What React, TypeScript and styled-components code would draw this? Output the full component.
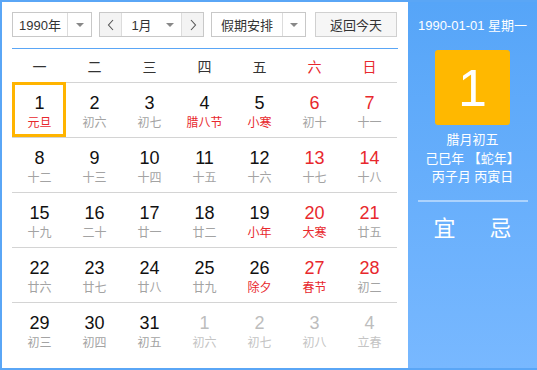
import React from "react";
import styled, { createGlobalStyle, css } from "styled-components";

const Global = createGlobalStyle`
  html, body { margin: 0; padding: 0; background: #fff; }
  body { font-family: "Liberation Sans", "Noto Sans CJK SC", sans-serif; }
  *, *::before, *::after { box-sizing: border-box; }
`;

const CJK = `"Liberation Sans", "Noto Sans CJK SC", sans-serif`;

const Frame = styled.div`
  width: 537px;
  height: 370px;
  display: flex;
  background: #5aa6f6;
  padding: 2px 0 2px 2px;
`;

const Main = styled.div`
  width: 406px;
  background: #fff;
  padding: 10px 10px 0 10px;
  display: flex;
  flex-direction: column;
`;

const Toolbar = styled.div`
  display: flex;
  height: 25px;
  font-family: ${CJK};
  font-size: 13px;
  color: #333;
`;

const Select = styled.div<{ $w: number; $text: number; $ml?: number }>`
  width: ${(p) => p.$w}px;
  margin-left: ${(p) => p.$ml ?? 0}px;
  height: 25px;
  border: 1px solid #c8c8c8;
  background: #fff;
  display: grid;
  grid-template-columns: ${(p) => p.$text}px 1fr;
`;

const SelText = styled.div`
  display: flex;
  align-items: center;
  justify-content: center;
  border-right: 1px solid #dcdcdc;
`;

const Arrow = styled.div`
  display: flex;
  align-items: center;
  justify-content: center;
  &::after {
    content: "";
    border-left: 4px solid transparent;
    border-right: 4px solid transparent;
    border-top: 4px solid #888;
  }
`;

const MonthGroup = styled.div`
  margin-left: 7px;
  width: 105px;
  height: 25px;
  border: 1px solid #c8c8c8;
  display: grid;
  grid-template-columns: 22px 1fr 22px;
`;

const NavBtn = styled.div<{ $side: "l" | "r" }>`
  background: #f3f3f3;
  display: flex;
  align-items: center;
  justify-content: center;
  ${(p) => (p.$side === "l" ? css`border-right: 1px solid #dcdcdc;` : css`border-left: 1px solid #dcdcdc;`)}
`;

const MonthSel = styled.div`
  display: grid;
  grid-template-columns: 1fr 22px;
  & > span {
    display: flex;
    align-items: center;
    justify-content: center;
    padding-left: 2px;
  }
`;

const TodayBtn = styled.div`
  margin-left: 9px;
  width: 82px;
  height: 25px;
  border: 1px solid #d0d0d0;
  background: #f6f6f6;
  display: flex;
  align-items: center;
  justify-content: center;
  color: #333;
`;

const BlueLine = styled.div`
  margin-top: 11px;
  height: 1px;
  background: #5aa6f6;
`;

const Grid = styled.div`
  display: grid;
  grid-template-columns: repeat(7, 55px);
`;

const Head = styled.div<{ $red?: boolean }>`
  height: 34px;
  display: flex;
  align-items: center;
  justify-content: center;
  font-family: ${CJK};
  font-size: 14px;
  color: ${(p) => (p.$red ? "#e8282d" : "#333")};
  border-bottom: 1px solid #d4d4d4;
`;

const Cell = styled.div<{ $sel?: boolean; $last?: boolean }>`
  height: 55px;
  display: flex;
  flex-direction: column;
  align-items: center;
  padding-top: 10px;
  border-bottom: ${(p) => (p.$last ? "none" : "1px solid #d4d4d4")};
  position: relative;
  ${(p) =>
    p.$sel &&
    css`
      &::before {
        content: "";
        position: absolute;
        left: 0;
        top: -1px;
        width: 54px;
        height: 55px;
        border: 3px solid #ffb400;
      }
    `}
`;

const Num = styled.div<{ $tone: "n" | "r" | "g" }>`
  height: 21px;
  line-height: 21px;
  font-family: "Liberation Sans", Arial, sans-serif;
  font-size: 18px;
  color: ${(p) => (p.$tone === "r" ? "#e8282d" : p.$tone === "g" ? "#bdbdbd" : "#111")};
`;

const Lunar = styled.div<{ $tone: "n" | "r" | "g" }>`
  margin-top: 1px;
  line-height: 16px;
  font-family: ${CJK};
  font-size: 12px;
  color: ${(p) => (p.$tone === "r" ? "#e8282d" : p.$tone === "g" ? "#c4c4c4" : "#a3a3a3")};
`;

const Side = styled.div`
  flex: 1;
  background: linear-gradient(#56a5f8, #78b8ff);
  display: flex;
  flex-direction: column;
  align-items: center;
  color: #fff;
  font-family: ${CJK};
`;

const DateLine = styled.div`
  margin-top: 15px;
  font-size: 13px;
  line-height: 18px;
`;

const DayBox = styled.div`
  margin-top: 15px;
  width: 75px;
  height: 75px;
  border-radius: 3px;
  background: #ffb800;
  display: flex;
  align-items: center;
  justify-content: center;
  font-family: "Liberation Sans", Arial, sans-serif;
  font-size: 52px;
  color: #fff;
`;

const Info = styled.div<{ $mt?: number }>`
  margin-top: ${(p) => p.$mt ?? 0}px;
  font-size: 13px;
  line-height: 18.5px;
  text-align: center;
`;

const Divider = styled.div`
  margin-top: 13px;
  width: 110px;
  height: 2px;
  background: rgba(255, 255, 255, 0.45);
`;

const YiJi = styled.div`
  margin-top: 13px;
  display: flex;
  gap: 34px;
  font-size: 22px;
  line-height: 28px;
`;

type Tone = "n" | "r" | "g";
type Day = { d: number; l: string; nt: Tone; lt: Tone; sel?: boolean };

const heads = ["一", "二", "三", "四", "五", "六", "日"];

const mk = (d: number, l: string, col: number, lr = false, other = false, sel = false): Day => ({
  d,
  l,
  nt: other ? "g" : col >= 5 ? "r" : "n",
  lt: other ? "g" : lr ? "r" : "n",
  sel,
});

const lunar: [string, boolean][] = [
  ["元旦", true], ["初六", false], ["初七", false], ["腊八节", true], ["小寒", true], ["初十", false], ["十一", false],
  ["十二", false], ["十三", false], ["十四", false], ["十五", false], ["十六", false], ["十七", false], ["十八", false],
  ["十九", false], ["二十", false], ["廿一", false], ["廿二", false], ["小年", true], ["大寒", true], ["廿五", false],
  ["廿六", false], ["廿七", false], ["廿八", false], ["廿九", false], ["除夕", true], ["春节", true], ["初二", false],
  ["初三", false], ["初四", false], ["初五", false],
];
const tail = ["初六", "初七", "初八", "立春"];

const days: Day[] = [];
lunar.forEach(([l, r], i) => days.push(mk(i + 1, l, i % 7, r, false, i === 0)));
tail.forEach((l, i) => days.push(mk(i + 1, l, (31 + i) % 7, false, true)));

const Chev = ({ dir }: { dir: "l" | "r" }) => (
  <svg width="8" height="12" viewBox="0 0 8 12">
    <path
      d={dir === "l" ? "M6 1 L1.5 6 L6 11" : "M2 1 L6.5 6 L2 11"}
      fill="none"
      stroke="#555"
      strokeWidth="1.1"
    />
  </svg>
);

export default function App() {
  return (
    <>
      <Global />
      <Frame>
        <Main>
          <Toolbar>
            <Select $w={80} $text={55}>
              <SelText>1990年</SelText>
              <Arrow />
            </Select>
            <MonthGroup>
              <NavBtn $side="l">
                <Chev dir="l" />
              </NavBtn>
              <MonthSel>
                <span>1月</span>
                <Arrow />
              </MonthSel>
              <NavBtn $side="r">
                <Chev dir="r" />
              </NavBtn>
            </MonthGroup>
            <Select $w={95} $text={71} $ml={7}>
              <SelText>假期安排</SelText>
              <Arrow />
            </Select>
            <TodayBtn>返回今天</TodayBtn>
          </Toolbar>
          <BlueLine />
          <Grid>
            {heads.map((h, i) => (
              <Head key={h} $red={i >= 5}>
                {h}
              </Head>
            ))}
            {days.map((d, i) => (
              <Cell key={i} $sel={d.sel} $last={i >= 28}>
                <Num $tone={d.nt}>{d.d}</Num>
                <Lunar $tone={d.lt}>{d.l}</Lunar>
              </Cell>
            ))}
          </Grid>
        </Main>
        <Side>
          <DateLine>1990-01-01 星期一</DateLine>
          <DayBox>1</DayBox>
          <Info $mt={6}>腊月初五</Info>
          <Info>己巳年 【蛇年】</Info>
          <Info>丙子月 丙寅日</Info>
          <Divider />
          <YiJi>
            <span>宜</span>
            <span>忌</span>
          </YiJi>
        </Side>
      </Frame>
    </>
  );
}
